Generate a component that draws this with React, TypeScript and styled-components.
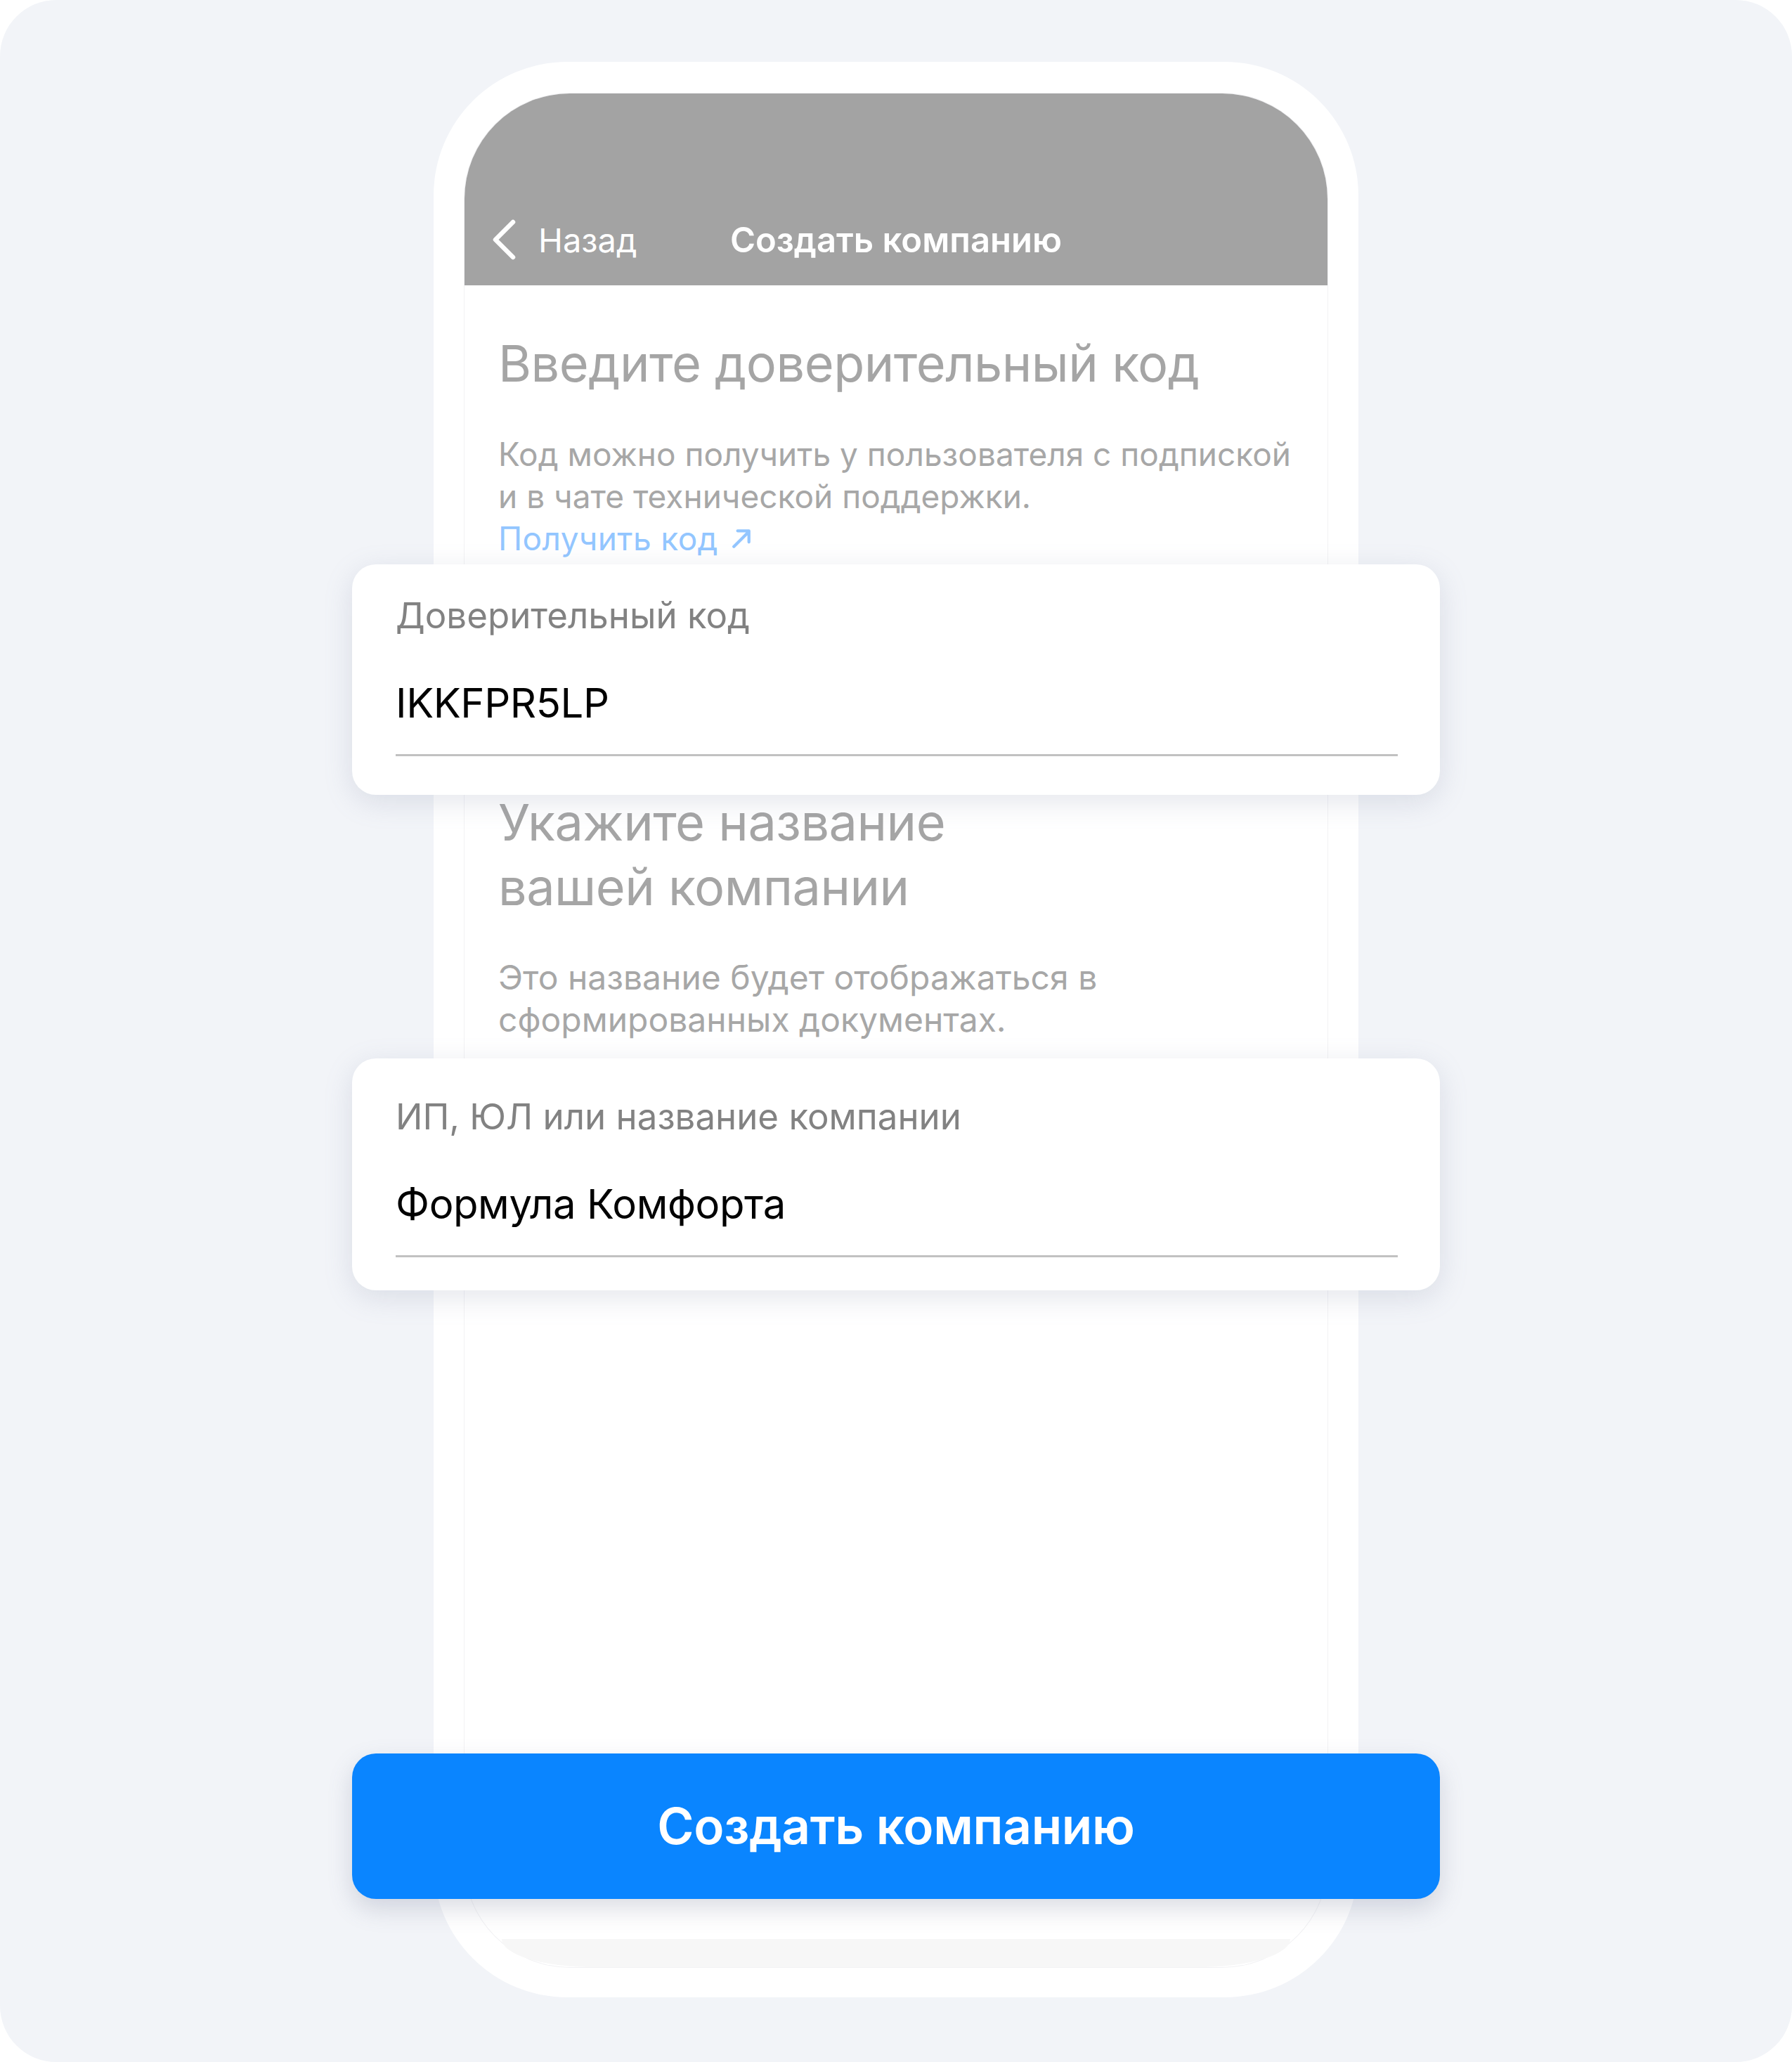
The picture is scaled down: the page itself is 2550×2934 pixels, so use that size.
import React from "react";
import styled, { createGlobalStyle } from "styled-components";

const GlobalStyle = createGlobalStyle`
  html, body { margin: 0; padding: 0; background: #ffffff; }
  body {
    font-family: Inter, "Noto Sans", "Liberation Sans", sans-serif;
    -webkit-font-smoothing: antialiased;
  }
  * { box-sizing: border-box; }
`;

const FONT = `Inter, "Noto Sans", "Liberation Sans", sans-serif`;

const Page = styled.div`
  width: 2550px;
  height: 2934px;
  background: #f2f4f8;
  border-radius: 80px;
  display: flex;
  justify-content: center;
  padding-top: 88px;
`;

const PhoneFrame = styled.div`
  width: 1316px;
  height: 2754px;
  background: #ffffff;
  border-radius: 190px;
  padding: 45px 44px 43px 44px;
  display: flex;
  flex-direction: column;
`;

const Screen = styled.div`
  flex: 1;
  display: flex;
  flex-direction: column;
  border-radius: 150px;
  background: #ffffff;
  box-shadow: 0 0 0 1px #f2f2f4;
`;

const NavHeader = styled.header`
  height: 273px;
  flex-shrink: 0;
  background: #a3a3a3;
  border-radius: 150px 150px 0 0;
  display: flex;
  align-items: flex-end;
  padding: 0 39px 21px;
`;

const NavRow = styled.div`
  width: 100%;
  height: 88px;
  display: grid;
  grid-template-columns: 1fr auto 1fr;
  align-items: center;
`;

const BackButton = styled.button`
  justify-self: start;
  display: flex;
  align-items: center;
  gap: 32px;
  background: none;
  border: 0;
  padding: 0;
  color: #ffffff;
  font: 400 47px/1 ${FONT};
  cursor: pointer;
`;

const NavTitle = styled.h1`
  margin: 0;
  color: #ffffff;
  font: 600 49px/1 ${FONT};
  letter-spacing: 0;
`;

const Content = styled.main`
  flex: 1;
  display: flex;
  flex-direction: column;
  padding: 68px 48px 0;
`;

const Title = styled.h2<{ $mt?: number }>`
  margin: ${(p) => p.$mt ?? 0}px 0 0;
  font: 400 72px/86px ${FONT};
  letter-spacing: -0.5px;
  color: #a5a5a5;
`;

const TitleTall = styled(Title)`
  line-height: 92px;
`;

const Description = styled.p<{ $mt: number; $size: number }>`
  margin: ${(p) => p.$mt}px 0 0;
  font: 400 ${(p) => p.$size}px/60px ${FONT};
  letter-spacing: 0;
  color: #a7a7a7;
`;

const InfoLink = styled.a`
  display: inline-flex;
  align-items: center;
  gap: 18px;
  color: #93c6ff;
  text-decoration: none;
  font: 400 46px/60px ${FONT};
  letter-spacing: 0.4px;
`;

const Card = styled.section<{ $mt: number; $pt: number; $pb: number }>`
  margin: ${(p) => p.$mt}px -208px 0;
  padding: ${(p) => p.$pt}px 60px ${(p) => p.$pb}px 62px;
  background: #ffffff;
  border-radius: 34px;
  box-shadow: 0 10px 40px rgba(120, 130, 160, 0.2);
  display: flex;
  flex-direction: column;
  position: relative;
`;

const FieldLabel = styled.label`
  font: 400 51px/58px ${FONT};
  letter-spacing: 0;
  color: #828282;
`;

const FieldValue = styled.div`
  margin-top: 60px;
  padding-bottom: 38px;
  border-bottom: 3px solid #c1c1c1;
  font: 400 58px/70px ${FONT};
  letter-spacing: -0.4px;
  color: #000000;
`;

const Spacer = styled.div`
  flex: 1;
`;

const PrimaryButton = styled.button`
  margin: 0 -208px 57px;
  height: 207px;
  border: 0;
  border-radius: 34px;
  background: #0a85ff;
  color: #ffffff;
  font: 600 71px/1 ${FONT};
  letter-spacing: -0.3px;
  box-shadow: 0 14px 34px rgba(90, 100, 130, 0.22);
  cursor: pointer;
  position: relative;
`;

const HomeStrip = styled.div`
  height: 40px;
  flex-shrink: 0;
  margin: 0 53px;
  background: #f7f7f7;
  border-radius: 0 0 130px 130px / 0 0 40px 40px;
`;

const Chevron = () => (
  <svg width="34" height="58" viewBox="0 0 34 58" fill="none">
    <path
      d="M30 4 L5 29 L30 54"
      stroke="#ffffff"
      strokeWidth="6.5"
      strokeLinecap="round"
      strokeLinejoin="round"
    />
  </svg>
);

const ArrowUpRight = () => (
  <svg width="30" height="30" viewBox="0 0 28 28" fill="none">
    <path
      d="M4 25 L24 5 M9 4 L24 4 L24 19"
      stroke="#93c6ff"
      strokeWidth="4"
      strokeLinecap="round"
      strokeLinejoin="round"
    />
  </svg>
);

export default function App() {
  return (
    <>
      <GlobalStyle />
      <Page>
        <PhoneFrame>
          <Screen>
            <NavHeader>
              <NavRow>
                <BackButton type="button">
                  <Chevron />
                  Назад
                </BackButton>
                <NavTitle>Создать компанию</NavTitle>
                <span />
              </NavRow>
            </NavHeader>
            <Content>
              <Title>Введите доверительный код</Title>
              <Description $mt={56} $size={46}>
                Код можно получить у пользователя с подпиской
                <br />и в чате технической поддержки.
                <br />
                <InfoLink href="#">
                  Получить код
                  <ArrowUpRight />
                </InfoLink>
              </Description>
              <Card $mt={7} $pt={44} $pb={55}>
                <FieldLabel>Доверительный код</FieldLabel>
                <FieldValue>IKKFPR5LP</FieldValue>
              </Card>
              <TitleTall $mt={-7}>
                Укажите название
                <br />
                вашей компании
              </TitleTall>
              <Description $mt={53} $size={48}>
                Это название будет отображаться в
                <br />
                сформированных документах.
              </Description>
              <Card $mt={25} $pt={54} $pb={47}>
                <FieldLabel>ИП, ЮЛ или название компании</FieldLabel>
                <FieldValue>Формула Комфорта</FieldValue>
              </Card>
              <Spacer />
              <PrimaryButton type="button">Создать компанию</PrimaryButton>
            </Content>
            <HomeStrip />
          </Screen>
        </PhoneFrame>
      </Page>
    </>
  );
}
